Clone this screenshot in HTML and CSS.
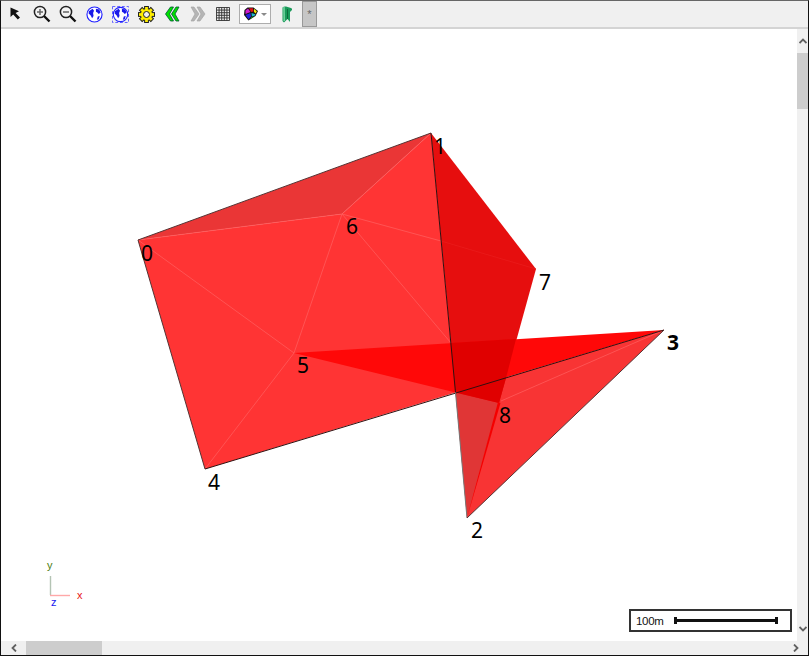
FILE: index.html
```html
<!DOCTYPE html>
<html lang="en">
<head>
<meta charset="utf-8">
<title>Mesh view</title>
<link rel="stylesheet" href="styles.css">
</head>
<body>
<div class="window">
  <div class="toolbar">
    <span class="tool"><svg width="16" height="16" viewBox="0 0 16 16"><path d="M2.5 1.5 L2.5 11 L5.2 8.6 L9.8 13.6 L12 11.4 L7.6 7 L11 5.2 Z" fill="#111"/></svg></span>
    <span class="tool"><svg width="18" height="18" viewBox="0 0 18 18"><circle cx="7" cy="7" r="5.6" fill="#f4f4f4" stroke="#222" stroke-width="1.5"/><path d="M4 7H10M7 4V10" stroke="#666" stroke-width="1.5"/><path d="M11 11L16.5 16.5" stroke="#111" stroke-width="2.4"/></svg></span>
    <span class="tool"><svg width="18" height="18" viewBox="0 0 18 18"><circle cx="7" cy="7" r="5.6" fill="#f4f4f4" stroke="#222" stroke-width="1.5"/><path d="M4 7H10" stroke="#666" stroke-width="1.5"/><path d="M11 11L16.5 16.5" stroke="#111" stroke-width="2.4"/></svg></span>
    <span class="tool"><svg width="17" height="17" viewBox="0 0 18 18"><circle cx="9" cy="9" r="8" fill="#fff" stroke="#2020ff" stroke-width="1.2"/><path d="M3 5.5 L7 3 L8.5 5 L7.5 7.5 L8 10.5 L6.5 13 L5 10 L2.8 8 Z M10.5 3 L14 3.8 L15.5 7 L13.5 8.5 L12 7 L10.5 6 Z M12.5 11 L14.5 10.5 L13.5 14 L11.5 14.5 Z" fill="#1a1ae8"/></svg></span>
    <span class="tool"><svg width="17" height="17" viewBox="0 0 18 18"><rect x="0.5" y="0.5" width="17" height="17" fill="none" stroke="#5a5aff" stroke-dasharray="3 2"/><circle cx="9" cy="9" r="7.6" fill="#fff" stroke="#2020ff" stroke-width="1.2"/><path d="M3 5.5 L7 3 L8.5 5 L7.5 7.5 L8 10.5 L6.5 13 L5 10 L2.8 8 Z M10.5 3 L14 3.8 L15.5 7 L13.5 8.5 L12 7 L10.5 6 Z M12.5 11 L14.5 10.5 L13.5 14 L11.5 14.5 Z" fill="#1a1ae8"/></svg></span>
    <span class="tool"><svg width="17" height="17" viewBox="0 0 17 17">
      <g class="gear-teeth">
        <rect x="6.6" y="0.5" width="3.8" height="4"/>
        <rect x="6.6" y="0.5" width="3.8" height="4" transform="rotate(45 8.5 8.5)"/>
        <rect x="6.6" y="0.5" width="3.8" height="4" transform="rotate(90 8.5 8.5)"/>
        <rect x="6.6" y="0.5" width="3.8" height="4" transform="rotate(135 8.5 8.5)"/>
        <rect x="6.6" y="0.5" width="3.8" height="4" transform="rotate(180 8.5 8.5)"/>
        <rect x="6.6" y="0.5" width="3.8" height="4" transform="rotate(225 8.5 8.5)"/>
        <rect x="6.6" y="0.5" width="3.8" height="4" transform="rotate(270 8.5 8.5)"/>
        <rect x="6.6" y="0.5" width="3.8" height="4" transform="rotate(315 8.5 8.5)"/>
      </g>
      <circle cx="8.5" cy="8.5" r="5.6" fill="#ffee00"/>
      <circle cx="8.5" cy="8.5" r="3" fill="#f0f0f0" stroke="#222"/>
    </svg></span>
    <span class="tool"><svg width="16" height="16" viewBox="0 0 16 16"><path d="M6.5 1 L1.5 8 L6.5 15 H9.5 L5.5 8 L9.5 1 Z M12 1 L7.5 8 L12 15 H15 L11 8 L15 1 Z" fill="#00e000" stroke="#053" stroke-width="0.8"/></svg></span>
    <span class="tool"><svg width="16" height="16" viewBox="0 0 16 16"><path d="M1 1 L5 8 L1 15 H4 L9 8 L4 1 Z M7 1 L11 8 L7 15 H10 L15 8 L10 1 Z" fill="#b5b5b5" stroke="#a0a0a0" stroke-width="0.6"/></svg></span>
    <span class="tool tool-grid"><svg width="14" height="14" viewBox="0 0 15 15"><path d="M0.5 0.5H14.5V14.5H0.5Z M0.5 3.3H14.5M0.5 6.1H14.5M0.5 8.9H14.5M0.5 11.7H14.5M3.3 0.5V14.5M6.1 0.5V14.5M8.9 0.5V14.5M11.7 0.5V14.5" fill="none" stroke="#333"/></svg></span>
    <span class="combo">
      <svg width="16" height="14" viewBox="0 0 15 14"><path d="M4 0.5H10L14.5 4L12 9L5 13.5L0.5 8L1 3Z" fill="#111"/><path d="M4.5 1.5L7 5L2 7L2 3.5Z" fill="#d01ad0"/><path d="M5.5 1.3H9.5L10 4.5L7.7 5Z" fill="#e01010"/><path d="M10.5 1.8L13.3 4.2L12.3 6.5L10.5 5Z" fill="#f2e600"/><path d="M2 8L7 6L7.5 9.5L5 12.2Z" fill="#2222dd"/><path d="M8 6L12 7.3L11 8.7L8.3 9.5Z" fill="#19b8c9"/><path d="M7.8 10.2L10.5 9.4L6.5 12Z" fill="#22bb22"/></svg>
      <span class="combo-arrow"></span>
    </span>
    <span class="tool tool-flag"><svg width="12" height="17" viewBox="0 0 12 17"><path d="M1.5 1.5 Q3 0 5 0.5 L10 2 Q11.5 2.5 11 4 L9 6 L9 16 L6.5 13 L3 16.5 L1.5 15 Z" fill="#1a9a5a"/><path d="M3 1 L3.2 15" stroke="#7fd9a8" stroke-width="1.4"/><path d="M6.5 3 L6.5 13" stroke="#0d6b3c" stroke-width="1"/></svg></span>
    <span class="star">*</span>
  </div>
  <div class="middle">
    <svg class="canvas" width="796" height="612" viewBox="1 29 796 612">
      <polygon class="f-main" points="138,240 342,214 431,133 455.5,392.5 205,469"/>
      <polygon class="f-top" points="138,240 431,133 342,214"/>
      <polygon class="f-right" points="455.5,392.5 664,330 467,518"/>
      <polygon class="f-shade" points="455.5,392.5 498,403 467,518"/>
      <polygon class="f-fold" points="431,133 536,269 499,403 455.5,392.5"/>
      <polygon class="f-red" points="294,353 664,330 455.5,392.5"/>
      <polygon class="f-over" points="451,343 516,339 506,378 499,403 455.5,392.5"/>
      <polygon class="f-sliver" points="498,402 500.5,403 467,518"/>
      <g class="mesh">
        <line x1="138" y1="240" x2="342" y2="214"/>
        <line x1="342" y1="214" x2="431" y2="133"/>
        <line x1="342" y1="214" x2="294" y2="353"/>
        <line x1="138" y1="240" x2="294" y2="353"/>
        <line x1="205" y1="469" x2="294" y2="353"/>
        <line x1="342" y1="214" x2="451" y2="343"/>
        <line x1="342" y1="214" x2="441" y2="241"/>
        <line x1="501" y1="401" x2="664" y2="330"/>
      </g>
      <line class="mesh-faint" x1="441" y1="241" x2="536" y2="269"/>
      <g class="edge">
        <line class="edge-soft" x1="138" y1="240" x2="431" y2="133"/>
        <line class="edge-soft" x1="138" y1="240" x2="205" y2="469"/>
        <line x1="205" y1="469" x2="664" y2="330"/>
        <line x1="431" y1="133" x2="455.5" y2="392.5"/>
        <line class="edge-pale" x1="455.5" y1="392.5" x2="467" y2="518"/>
        <line class="edge-soft" x1="467" y1="518" x2="664" y2="330"/>
      </g>
      <g class="labels">
        <text x="141" y="261">0</text>
        <text x="434" y="154">1</text>
        <text x="471" y="538">2</text>
        <text class="bold" x="667" y="350">3</text>
        <text x="208" y="490">4</text>
        <text x="297" y="373">5</text>
        <text x="346" y="234">6</text>
        <text x="539" y="290">7</text>
        <text x="499" y="423">8</text>
      </g>
      <line class="axis-y" x1="50.5" y1="576" x2="50.5" y2="595"/>
      <line class="axis-x" x1="50" y1="595.5" x2="70" y2="595.5"/>
      <text class="ax ax-y" x="47" y="569">y</text>
      <text class="ax ax-x" x="77" y="599">x</text>
      <text class="ax ax-z" x="51" y="606">z</text>
    </svg>
    <div class="vbar">
      <span class="arrow-box"><svg width="8" height="6" viewBox="0 0 8 6"><path d="M0.5 5L4 1.5L7.5 5" fill="none" stroke="#606060" stroke-width="1.8"/></svg></span>
      <span class="vtrack"><span class="vthumb"></span></span>
      <span class="arrow-box"><svg width="8" height="6" viewBox="0 0 8 6"><path d="M0.5 1L4 4.5L7.5 1" fill="none" stroke="#606060" stroke-width="1.8"/></svg></span>
    </div>
    <div class="scale">
      <span class="scale-text">100m</span>
      <span class="scale-bar"></span>
    </div>
  </div>
  <div class="hbar">
    <span class="arrow-box-h"><svg width="6" height="8" viewBox="0 0 6 8"><path d="M5 0.5L1.5 4L5 7.5" fill="none" stroke="#606060" stroke-width="1.8"/></svg></span>
    <span class="htrack"><span class="hthumb"></span></span>
    <span class="arrow-box-h"><svg width="6" height="8" viewBox="0 0 6 8"><path d="M1 0.5L4.5 4L1 7.5" fill="none" stroke="#606060" stroke-width="1.8"/></svg></span>
  </div>
</div>
</body>
</html>
```
FILE: styles.css
```css
* { box-sizing: border-box; }
html, body { margin: 0; padding: 0; background: #fff; }
body { width: 809px; height: 656px; overflow: hidden; }
.window {
  width: 809px;
  height: 656px;
  display: flex;
  flex-direction: column;
  border: 1px solid #111;
  border-top-color: #666;
}
.toolbar {
  height: 28px;
  flex: none;
  display: flex;
  align-items: center;
  padding: 0 0 0 2px;
  background: #f0f0f0;
  border-bottom: 2px solid #d4d4d4;
}
.tool {
  width: 26px;
  height: 26px;
  flex: none;
  display: flex;
  align-items: center;
  justify-content: center;
}
.tool-grid { width: 24px; }
.gear-teeth rect { fill: #ffee00; stroke: #222; stroke-width: 1; }
.combo {
  width: 32px;
  height: 20px;
  margin-left: 4px;
  flex: none;
  display: flex;
  align-items: center;
  gap: 2px;
  padding-left: 3px;
  background: #fff;
  border: 1px solid #adadad;
}
.combo-arrow {
  width: 0;
  height: 0;
  border-left: 3.5px solid transparent;
  border-right: 3.5px solid transparent;
  border-top: 3.5px solid #8a8a8a;
}
.tool-flag { width: 20px; margin-left: 6px; }
.star {
  width: 15px;
  height: 26px;
  margin-left: 5px;
  flex: none;
  display: flex;
  justify-content: center;
  padding-top: 5px;
  font: 11px/14px "Liberation Sans", sans-serif;
  color: #666;
  background: #c6c6c6;
  border: 1px solid #999;
}
.middle {
  flex: 1;
  min-height: 0;
  display: flex;
  position: relative;
}
.canvas { display: block; flex: none; background: #fff; }
.f-main { fill: #ff3434; }
.f-top { fill: #ea3636; }
.f-right { fill: #f83434; }
.f-shade { fill: #e03636; }
.f-fold { fill: #e60e0e; }
.f-red { fill: #ff0808; }
.f-over { fill: #e00000; }
.f-sliver { fill: #f40000; }
.mesh line { stroke: #ff5c5c; stroke-width: 0.8; }
.mesh-faint { stroke: #ea1c1c; stroke-width: 0.8; }
.edge line { stroke: #301010; stroke-width: 1; }
.edge .edge-soft { stroke: #553333; }
.edge .edge-pale { stroke: #777; }
.labels text {
  font: 21px "Noto Sans", "Open Sans", sans-serif;
  fill: #000;
}
.labels .bold { font-weight: 700; }
.axis-y { stroke: #b4c4b4; stroke-width: 1.4; }
.axis-x { stroke: #ffa8a8; stroke-width: 1.4; }
.ax { font: 11px "Liberation Sans", sans-serif; }
.ax-y { fill: #4d7d10; }
.ax-x { fill: #e81818; }
.ax-z { fill: #1a1af0; }
.vbar {
  width: 11px;
  flex: none;
  display: flex;
  flex-direction: column;
  background: #f0f0f0;
}
.arrow-box {
  height: 24px;
  flex: none;
  display: flex;
  align-items: center;
  justify-content: center;
}
.vtrack { flex: 1; min-height: 0; }
.vthumb { display: block; width: 11px; height: 56px; background: #cdcdcd; }
.scale {
  position: absolute;
  right: 16px;
  bottom: 9px;
  width: 163px;
  height: 23px;
  display: flex;
  align-items: center;
  padding-left: 5px;
  gap: 10px;
  background: #fff;
  border: 2px solid #333;
}
.scale-text { font: 11.5px "Liberation Sans", sans-serif; letter-spacing: -0.3px; color: #111; }
.scale-bar {
  display: block;
  width: 104px;
  height: 7px;
  background: linear-gradient(#111, #111) center / 100% 3px no-repeat;
  border-left: 3px solid #111;
  border-right: 3px solid #111;
}
.hbar {
  height: 14px;
  flex: none;
  display: flex;
  background: #f0f0f0;
}
.arrow-box-h {
  width: 25px;
  flex: none;
  display: flex;
  align-items: center;
  justify-content: center;
}
.htrack { flex: 1; min-width: 0; }
.hthumb { display: block; width: 76px; height: 14px; background: #cdcdcd; }
```
